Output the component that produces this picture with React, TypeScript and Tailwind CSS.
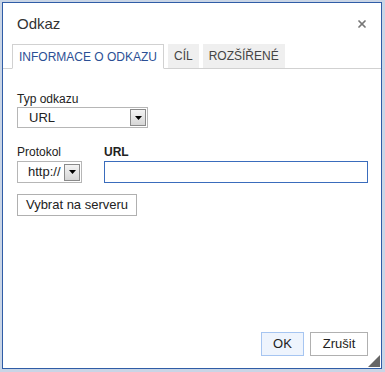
import { X } from 'lucide-react';

function Arrow() {
  return (
    <span className="flex h-[17px] w-[16px] items-center justify-center border border-[#8a8a8a] bg-gradient-to-b from-[#f4f4f4] to-[#d6d6d6]">
      <svg width="7" height="4" viewBox="0 0 7 4">
        <path d="M0 0h7L3.5 4z" fill="#000" />
      </svg>
    </span>
  );
}

export default function App() {
  const font = { fontFamily: '"Liberation Sans", Arial, sans-serif' };

  return (
    <div className="h-[372px] w-[385px] bg-[#c9d5e6] pl-[2px] pt-[2px]" style={font}>
      <div className="flex h-[367px] w-[380px] flex-col border border-[#2f5ca6] bg-white text-[#222]">
        {/* Header */}
        <div className="flex h-[41px] items-center justify-between pl-[14px] pr-[13px] pt-[1px]">
          <span className="text-[15px] text-[#333]">Odkaz</span>
          <X size={12} strokeWidth={3.5} className="text-[#777]" />
        </div>

        {/* Tabs */}
        <div className="flex h-[25px] items-end gap-[4px] border-b border-[#d1d1d1] pl-[9px]">
          <div className="relative -mb-px flex h-[25px] items-center border border-b-white border-[#d1d1d1] bg-white px-[6px] text-[12px] text-[#2b4f95]">
            INFORMACE O ODKAZU
          </div>
          <div className="flex h-[24px] items-center bg-[#efefef] px-[6px] text-[12px] text-[#444]">
            CÍL
          </div>
          <div className="flex h-[24px] items-center bg-[#efefef] px-[6px] text-[12px] text-[#444]">
            ROZŠÍŘENÉ
          </div>
        </div>

        {/* Body */}
        <div className="flex flex-1 flex-col pl-[14px] pr-[14px] pt-[23px] text-[12px]">
          <label className="leading-[14px]">Typ odkazu</label>
          <div className="mt-[1px] flex h-[21px] w-[131px] items-center justify-between border border-[#b6b6b6] pl-[11px] pr-[1px] text-[13px]">
            <span>URL</span>
            <Arrow />
          </div>

          <div className="mt-[17px] flex gap-[22px]">
            <div className="flex flex-col">
              <label className="leading-[14px]">Protokol</label>
              <div className="mt-[2px] flex h-[22px] w-[65px] items-center justify-between border border-[#b6b6b6] pl-[10px] pr-[1px] text-[13px]">
                <span>http://</span>
                <Arrow />
              </div>
            </div>
            <div className="flex flex-1 flex-col">
              <label className="font-bold leading-[14px]">URL</label>
              <div className="mt-[2px] h-[22px] w-[264px] border border-[#3a6cbc]" />
            </div>
          </div>

          <div className="mt-[11px] flex h-[22px] w-[120px] items-center justify-center border border-[#b0b0b0] text-[13px]">
            Vybrat na serveru
          </div>
        </div>

        {/* Footer */}
        <div className="relative flex justify-end gap-[6px] pb-[12px] pr-[13px]">
          <div className="flex h-[24px] w-[43px] items-center justify-center border border-[#a6c5f1] bg-[#eef4fd] text-[13px]">
            OK
          </div>
          <div className="flex h-[24px] w-[58px] items-center justify-center border border-[#b0b0b0] text-[13px]">
            Zrušit
          </div>
          <svg className="absolute bottom-[1px] right-[1px]" width="12" height="12" viewBox="0 0 12 12">
            <path d="M12 0V12H0z" fill="#666" />
          </svg>
        </div>
      </div>
    </div>
  );
}
